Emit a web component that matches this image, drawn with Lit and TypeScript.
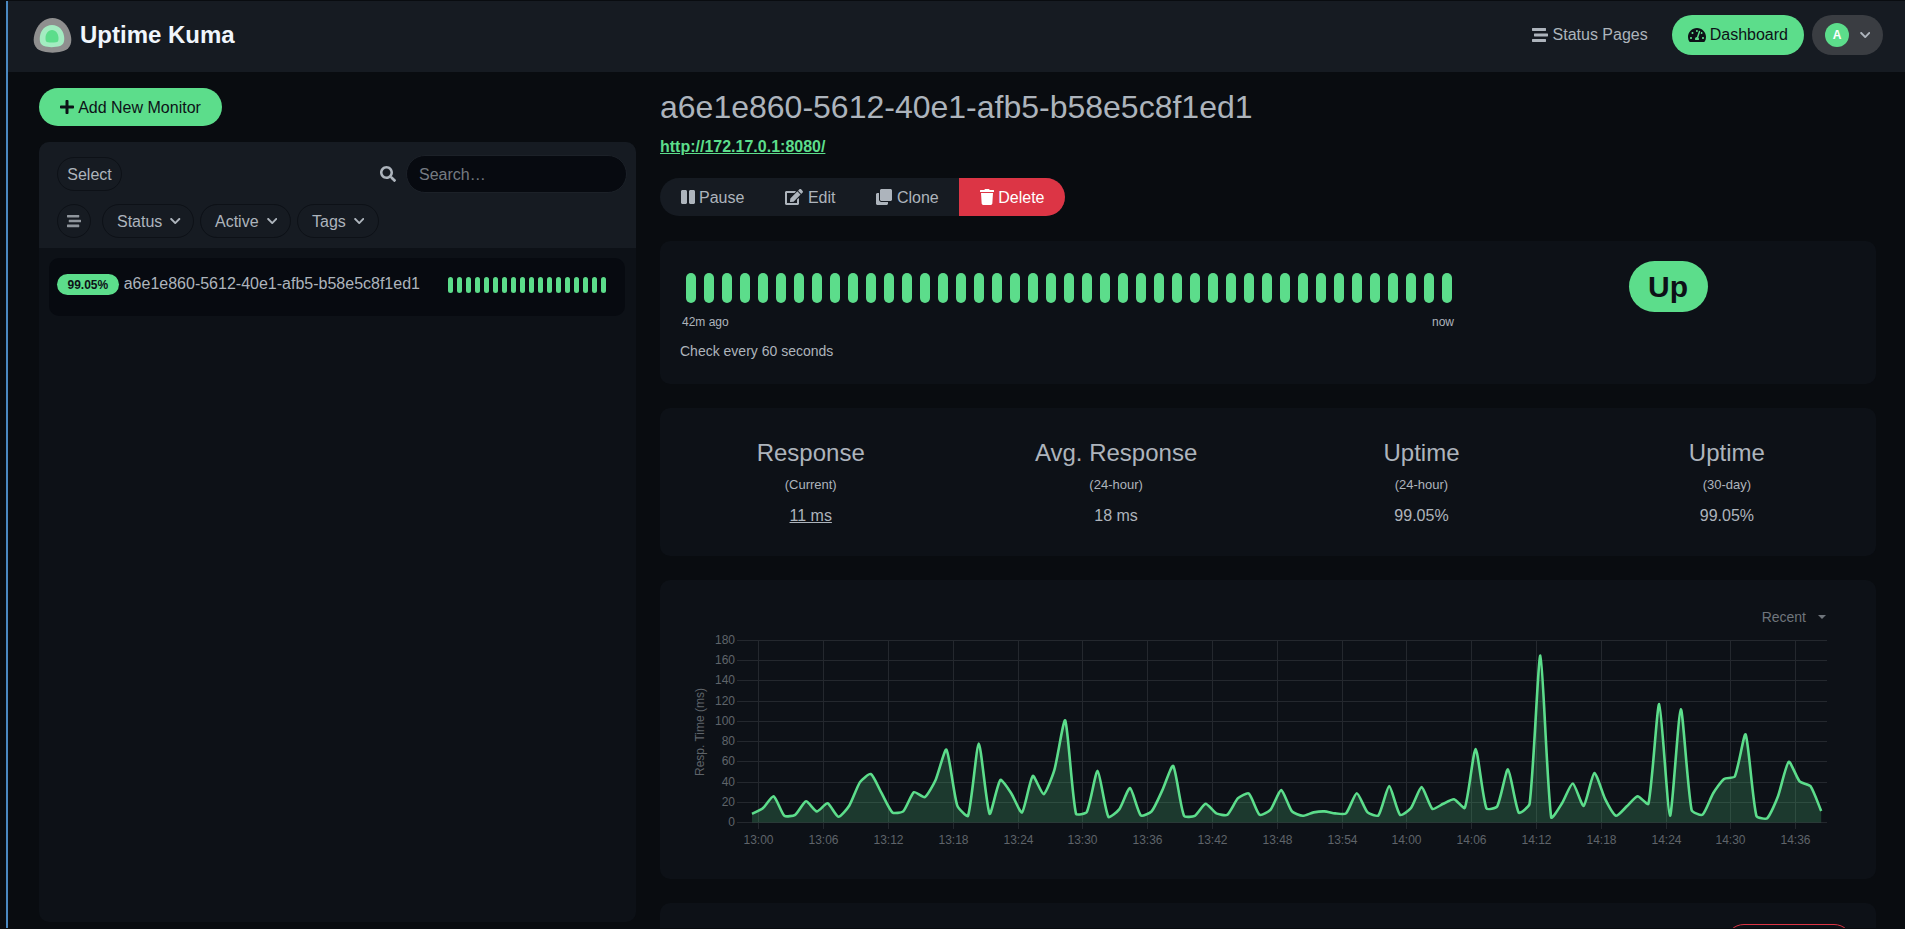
import { LitElement, html, css, svg } from "lit";
import { customElement } from "lit/decorators.js";

const ICONS: Record<string, [number, string]> = {
  plus: [448, "M416 208H272V64c0-17.67-14.33-32-32-32h-32c-17.67 0-32 14.33-32 32v144H32c-17.67 0-32 14.33-32 32v32c0 17.67 14.33 32 32 32h144v144c0 17.67 14.33 32 32 32h32c17.67 0 32-14.33 32-32V304h144c17.67 0 32-14.33 32-32v-32c0-17.67-14.33-32-32-32z"],
  search: [512, "M505 442.7L405.3 343c-4.5-4.5-10.6-7-17-7H372c27.6-35.3 44-79.7 44-128C416 93.1 322.9 0 208 0S0 93.1 0 208s93.1 208 208 208c48.3 0 92.7-16.4 128-44v16.3c0 6.4 2.5 12.5 7 17l99.7 99.7c9.4 9.4 24.6 9.4 33.9 0l28.3-28.3c9.4-9.4 9.4-24.6.1-34zM208 336c-70.7 0-128-57.2-128-128 0-70.7 57.2-128 128-128 70.7 0 128 57.2 128 128 0 70.7-57.2 128-128 128z"],
  chevron: [448, "M207.029 381.476L12.686 187.132c-9.373-9.373-9.373-24.569 0-33.941l22.667-22.667c9.357-9.357 24.522-9.375 33.901-.04L224 284.505l154.745-154.021c9.379-9.335 24.544-9.317 33.901.04l22.667 22.667c9.373 9.373 9.373 24.569 0 33.941L240.971 381.476c-9.373 9.372-24.569 9.372-33.942 0z"],
  stream: [512, "M16 128h416c8.84 0 16-7.16 16-16V48c0-8.84-7.16-16-16-16H16C7.16 32 0 39.16 0 48v64c0 8.84 7.16 16 16 16zm480 80H80c-8.84 0-16 7.16-16 16v64c0 8.84 7.16 16 16 16h416c8.84 0 16-7.16 16-16v-64c0-8.84-7.16-16-16-16zm-64 176H16c-8.84 0-16 7.16-16 16v64c0 8.84 7.16 16 16 16h416c8.84 0 16-7.16 16-16v-64c0-8.84-7.16-16-16-16z"],
  gauge: [576, "M288 32C128.94 32 0 160.94 0 320c0 52.8 14.25 102.26 39.06 144.8 5.61 9.62 16.3 15.2 27.44 15.2h443c11.14 0 21.83-5.58 27.44-15.2C561.75 422.26 576 372.8 576 320c0-159.06-128.94-288-288-288zm0 64c14.71 0 26.58 10.13 30.32 23.65-1.11 2.26-2.64 4.23-3.45 6.67l-9.22 27.67c-5.13 3.49-10.97 6.01-17.64 6.01-17.67 0-32-14.33-32-32S270.33 96 288 96zM96 384c-17.67 0-32-14.33-32-32s14.33-32 32-32 32 14.33 32 32-14.33 32-32 32zm48-160c-17.67 0-32-14.33-32-32s14.33-32 32-32 32 14.33 32 32-14.33 32-32 32zm246.77-72.41l-61.33 184C343.13 347.33 352 364.54 352 384c0 11.72-3.38 22.55-8.88 32H232.88c-5.5-9.45-8.88-20.28-8.88-32 0-33.94 26.5-61.43 59.9-63.59l61.34-184.01c4.17-12.56 17.73-19.45 30.36-15.17 12.57 4.19 19.35 17.79 15.17 30.36zm14.66 57.2l15.52-46.55c3.47-1.29 7.13-2.23 11.05-2.23 17.67 0 32 14.33 32 32s-14.33 32-32 32c-11.38-.01-20.89-6.28-26.57-15.22zM480 384c-17.67 0-32-14.33-32-32s14.33-32 32-32 32 14.33 32 32-14.33 32-32 32z"],
  pause: [448, "M144 479H48c-26.5 0-48-21.5-48-48V79c0-26.5 21.5-48 48-48h96c26.5 0 48 21.5 48 48v352c0 26.5-21.5 48-48 48zm304-48V79c0-26.5-21.5-48-48-48h-96c-26.5 0-48 21.5-48 48v352c0 26.5 21.5 48 48 48h96c26.5 0 48-21.5 48-48z"],
  edit: [576, "M402.6 83.2l90.2 90.2c3.8 3.8 3.8 10 0 13.8L274.4 405.6l-92.8 10.3c-12.4 1.4-22.9-9.1-21.5-21.5l10.3-92.8L388.8 83.2c3.8-3.8 10-3.8 13.8 0zm162-22.9l-48.8-48.8c-15.2-15.2-39.9-15.2-55.2 0l-35.4 35.4c-3.8 3.8-3.8 10 0 13.8l90.2 90.2c3.8 3.8 10 3.8 13.8 0l35.4-35.4c15.2-15.3 15.2-40 0-55.2zM384 346.2V448H64V128h229.8c3.2 0 6.2-1.3 8.5-3.5l40-40c7.6-7.6 2.2-20.5-8.5-20.5H48C21.5 64 0 85.5 0 112v352c0 26.5 21.5 48 48 48h352c26.5 0 48-21.5 48-48V306.2c0-10.7-12.9-16-20.5-8.5l-40 40c-2.2 2.3-3.5 5.3-3.5 8.5z"],
  clone: [512, "M464 0c26.51 0 48 21.49 48 48v288c0 26.51-21.49 48-48 48H176c-26.51 0-48-21.49-48-48V48c0-26.51 21.49-48 48-48h288M176 416c-44.112 0-80-35.888-80-80V128H48c-26.51 0-48 21.49-48 48v288c0 26.51 21.49 48 48 48h288c26.51 0 48-21.49 48-48v-48H176z"],
  trash: [448, "M432 32H312l-9.4-18.7A24 24 0 0 0 281.1 0H166.8a23.72 23.72 0 0 0-21.4 13.3L136 32H16A16 16 0 0 0 0 48v32a16 16 0 0 0 16 16h416a16 16 0 0 0 16-16V48a16 16 0 0 0-16-16zM53.2 467a48 48 0 0 0 47.9 45h245.8a48 48 0 0 0 47.9-45L416 128H32z"],
};

function icon(name: string, size = 16) {
  const [w, d] = ICONS[name];
  return html`<svg class="ico" width=${(size * w) / 512} height=${size} viewBox="0 0 ${w} 512" fill="currentColor"><path d=${d}></path></svg>`;
}

// response times, one sample per minute
const PINGS = [
  8.6, 14, 26, 6.6, 7.6, 21, 11, 19, 5.6, 16.5, 40, 48, 29, 10, 11, 30, 25, 42, 72, 17,
  6.6, 78, 8.6, 42, 29, 10, 46, 28, 52, 101, 8.6, 10.5, 51, 5.6, 13, 34, 7, 11, 32, 56,
  6.6, 6.6, 18.5, 9, 7.6, 24, 28.7, 7.6, 12.5, 32, 11, 6.6, 10, 11, 9, 9, 29, 10, 7, 36,
  7.6, 14, 35, 13.5, 18.5, 23, 14.5, 72.6, 14, 16, 52.5, 9.6, 18.5, 165, 5, 19, 38.6, 16.5, 49, 23,
  6.6, 16, 26, 18.5, 117, 6.6, 112, 12.5, 7.6, 29, 43, 45.5, 87, 6.6, 4.3, 26, 60, 40.6, 36, 11.5,
];

const TIME_LABELS = ["13:00", "13:06", "13:12", "13:18", "13:24", "13:30", "13:36", "13:42", "13:48", "13:54", "14:00", "14:06", "14:12", "14:18", "14:24", "14:30", "14:36"];

const X0 = 752;
const STEP = 10.8;
const Y0 = 822.5;
const PX_PER_MS = 182 / 180;
const TENSION = 0.2;

// bezier spline through the samples, chart.js style
function linePath(): string {
  const pts = PINGS.map((v, i) => [X0 + i * STEP, Y0 - v * PX_PER_MS]);
  const n = pts.length;
  const before: number[][] = [];
  const after: number[][] = [];
  for (let i = 0; i < n; i++) {
    const prev = pts[Math.max(i - 1, 0)];
    const cur = pts[i];
    const next = pts[Math.min(i + 1, n - 1)];
    const d01 = Math.hypot(cur[0] - prev[0], cur[1] - prev[1]);
    const d12 = Math.hypot(next[0] - cur[0], next[1] - cur[1]);
    const s = d01 + d12;
    const fa = (TENSION * d01) / s;
    const fb = (TENSION * d12) / s;
    before.push([cur[0] - fa * (next[0] - prev[0]), cur[1] - fa * (next[1] - prev[1])]);
    after.push([cur[0] + fb * (next[0] - prev[0]), cur[1] + fb * (next[1] - prev[1])]);
  }
  let d = `M${pts[0][0]} ${pts[0][1].toFixed(1)}`;
  for (let i = 0; i < n - 1; i++) {
    d += `C${after[i][0].toFixed(1)} ${after[i][1].toFixed(1)} ${before[i + 1][0].toFixed(1)} ${before[i + 1][1].toFixed(1)} ${pts[i + 1][0].toFixed(1)} ${pts[i + 1][1].toFixed(1)}`;
  }
  return d;
}

@customElement("ping-chart")
class PingChart extends LitElement {
  static styles = css`
    :host { display: block; }
    svg { display: block; }
    text { font-family: "Liberation Sans", Arial, sans-serif; font-size: 12px; fill: #5f646a; }
  `;

  render() {
    const d = linePath();
    const last = X0 + (PINGS.length - 1) * STEP;
    const ticks = [0, 20, 40, 60, 80, 100, 120, 140, 160, 180];
    return html`<svg width="1216" height="253" viewBox="660 626 1216 253">
      ${ticks.map((v) => {
        const y = Math.floor(Y0 - v * PX_PER_MS) + 0.5;
        return svg`<line x1="737" x2="1827" y1=${y} y2=${y} stroke="#24282e"></line>
          <text x="735" y=${y + 3.5} text-anchor="end">${v}</text>`;
      })}
      ${TIME_LABELS.map((t, i) => {
        const x = Math.floor(758.8 + i * 64.8) + 0.5;
        return svg`<line x1=${x} x2=${x} y1="640" y2="829" stroke="#24282e"></line>
          <text x=${x} y="844" text-anchor="middle">${t}</text>`;
      })}
      <text transform="translate(704 732) rotate(-90)" text-anchor="middle">Resp. Time (ms)</text>
      <path d="${d}L${last} ${Y0}L${X0} ${Y0}Z" fill="rgba(92,221,139,.2)"></path>
      <path d=${d} fill="none" stroke="#5cdd8b" stroke-width="2.6"></path>
    </svg>`;
  }
}

@customElement("app-root")
class AppRoot extends LitElement {
  static styles = css`
    :host {
      display: block;
      height: 100vh;
      box-sizing: border-box;
      padding: 1px 0 1px 6px;
      background: #090c10;
      color: #adb4bc;
      font-family: "Liberation Sans", Arial, sans-serif;
      font-size: 16px;
    }
    * { box-sizing: border-box; }
    .ico { display: block; flex: none; }
    .frame {
      height: 100%;
      overflow: hidden;
      border-left: 2px solid #4a88c0;
    }
    .nav {
      height: 71px;
      background: #161b22;
      display: flex;
      align-items: center;
      padding: 0 22px 3px 25px;
    }
    .logo { display: block; margin-right: 8px; }
    .brand { font-size: 24px; font-weight: 700; color: #f0f6fc; }
    .nav-links { margin-left: auto; display: flex; align-items: center; }
    .status-link { display: flex; align-items: center; gap: 5px; margin-right: 24px; }
    .dash {
      height: 40px;
      display: flex;
      align-items: center;
      gap: 4px;
      padding: 0 16px;
      border-radius: 20px;
      background: #5cdd8b;
      color: #0d1117;
    }
    .user {
      margin-left: 8px;
      width: 71px;
      height: 40px;
      border-radius: 20px;
      background: #3a3d42;
      display: flex;
      align-items: center;
      padding: 0 13px;
      justify-content: space-between;
    }
    .avatar {
      width: 24px;
      height: 24px;
      border-radius: 50%;
      background: #5cdd8b;
      color: #fff;
      font-size: 12px;
      font-weight: 700;
      display: flex;
      align-items: center;
      justify-content: center;
    }
    .main { display: flex; gap: 24px; padding: 16px 29px 0 31px; }
    .left { width: 597px; flex: none; }
    .right { flex: 1; min-width: 0; }
    .add {
      width: 183px;
      height: 38px;
      border-radius: 19px;
      background: #5cdd8b;
      color: #0d1117;
      display: flex;
      align-items: center;
      justify-content: center;
      gap: 4px;
      padding-top: 2px;
    }
    .add .ico, .pill .ico, .actions .ico { margin-top: -2px; }
    .list {
      margin-top: 16px;
      height: 780px;
      background: #0d1117;
      border-radius: 10px;
      overflow: hidden;
    }
    .list-head { height: 106px; background: #161b22; padding: 13px 9px 0 18px; }
    .head-row { display: flex; align-items: center; height: 38px; }
    .pill {
      height: 34px;
      border: 1px solid #0d1117;
      border-radius: 17px;
      display: flex;
      align-items: center;
      background: #161b22;
      padding-top: 2px;
    }
    .select { width: 65px; justify-content: center; }
    .search-ico { margin-left: auto; margin-right: 10px; }
    .search {
      width: 221px;
      height: 38px;
      border: 1px solid #1c2128;
      border-radius: 19px;
      background: #070a10;
      color: #adb4bc;
      font: inherit;
      padding: 1px 12px 0;
      outline: none;
    }
    .search::placeholder { color: #757b81; opacity: 1; }
    .filters { display: flex; margin-top: 11px; gap: 6px; }
    .burger { width: 34px; justify-content: center; margin-right: 5px; color: #8f959c; }
    .filter { padding: 2px 14px 0; gap: 8px; }
    .row {
      margin: 10px 11px 0 10px;
      height: 58px;
      border-radius: 10px;
      background: #070a10;
      display: flex;
      align-items: center;
      padding: 0 19px 5px 8px;
    }
    .badge {
      height: 21px;
      padding: 0 10.5px;
      border-radius: 11px;
      background: #5cdd8b;
      color: #0d1117;
      font-size: 12px;
      font-weight: 700;
      display: flex;
      align-items: center;
    }
    .name { margin-left: 5px; margin-top: -2px; }
    .mini { margin-left: auto; display: flex; gap: 4px; }
    .mini i { width: 5px; height: 16px; border-radius: 3px; background: #5cdd8b; }
    h1 { margin: 0; font-size: 32px; font-weight: 400; line-height: 38px; }
    .url {
      display: block;
      margin-top: 9px;
      line-height: 24px;
      font-weight: 700;
      color: #5cdd8b;
      text-decoration: underline;
    }
    .actions {
      margin-top: 19px;
      display: inline-flex;
      height: 38px;
      border-radius: 19px;
      overflow: hidden;
      background: #161b22;
      vertical-align: top;
    }
    .actions span {
      display: flex;
      align-items: center;
      gap: 4.5px;
      padding: 2px 20.5px 0;
    }
    .actions .del { background: #dc3545; color: #fff; }
    .card { background: #0d1117; border-radius: 10px; }
    .beats {
      margin-top: 25px;
      height: 143px;
      display: flex;
    }
    .beat-left { width: 800px; padding: 32px 0 0 20px; }
    .bars { display: flex; gap: 8px; padding-left: 6px; }
    .bars i { width: 10px; height: 30px; border-radius: 5px; background: #5cdd8b; }
    .ago {
      display: flex;
      justify-content: space-between;
      margin-top: 12px;
      padding: 0 6px 0 2px;
      font-size: 12px;
      line-height: 14px;
    }
    .every { margin-top: 12px; font-size: 14px; line-height: 21px; }
    .beat-right { flex: 1; display: flex; justify-content: center; padding-top: 20px; }
    .up {
      width: 79px;
      height: 51px;
      border-radius: 26px;
      background: #5cdd8b;
      color: #0d1117;
      font-size: 30px;
      font-weight: 700;
      display: flex;
      align-items: center;
      justify-content: center;
    }
    .stats {
      margin-top: 24px;
      height: 148px;
      padding: 30px 0 0;
    }
    .stat-grid {
      display: grid;
      grid-template-columns: repeat(4, 305.4px);
      margin-left: -2px;
      text-align: center;
    }
    .stat-title { font-size: 24px; line-height: 29px; }
    .stat-sub { font-size: 13px; line-height: 16px; margin-top: 10px; }
    .stat-val { line-height: 24px; margin-top: 11px; }
    .stat-val.link { text-decoration: underline; }
    .chart { margin-top: 24px; height: 299px; padding-top: 27px; }
    .recent {
      display: flex;
      align-items: center;
      justify-content: flex-end;
      height: 19px;
      padding-right: 50px;
      font-size: 14px;
      color: #6f757c;
    }
    .caret {
      margin-left: 12px;
      border: 4px solid transparent;
      border-top-color: #6f757c;
      border-bottom: 0;
    }
    .bottom { margin-top: 24px; height: 120px; padding: 21px 23px 0 0; display: flex; justify-content: flex-end; }
    .clear {
      width: 128px;
      height: 38px;
      border: 1px solid #dc3545;
      border-radius: 19px;
    }
  `;

  private filter(label: string, w: number) {
    return html`<div class="pill filter" style="width:${w}px">${label}${icon("chevron", 12)}</div>`;
  }

  render() {
    return html`<div class="frame">
      <div class="nav">
        <svg class="logo" width="39" height="35" viewBox="0 0 39 35">
          <path d="M19.5 0C27 0 33 5 36 12C39 19 39.500 26 35 30.500C29 36 10 36 4 30.500C-.5 26 0 19 3 12C6 5 12 0 19.5 0Z" fill="#8f8f8f"></path>
          <path d="M19 7C26 7 30 12 31 18C32 24 30 27 27 28C22 29.500 15 29.500 11 28C8 27 6 24 7 18C8 12 12 7 19 7Z" fill="#a3ecc1"></path>
          <path d="M19 12C23 12 25.500 16 25.500 20C25.500 23 25 24 23 24.200C20 24.600 17 24.600 15 24.200C13 24 12.500 23 12.500 20C12.500 16 15 12 19 12Z" fill="#5cdd8b"></path>
        </svg>
        <span class="brand">Uptime Kuma</span>
        <div class="nav-links">
          <div class="status-link">${icon("stream", 16)}Status Pages</div>
          <div class="dash">${icon("gauge", 16)}Dashboard</div>
          <div class="user"><span class="avatar">A</span>${icon("chevron", 12)}</div>
        </div>
      </div>
      <div class="main">
        <div class="left">
          <div class="add">${icon("plus", 16)}Add New Monitor</div>
          <div class="list">
            <div class="list-head">
              <div class="head-row">
                <div class="pill select">Select</div>
                <span class="search-ico">${icon("search", 16)}</span>
                <input class="search" placeholder="Search…" />
              </div>
              <div class="filters">
                <div class="pill burger">${icon("stream", 14)}</div>
                ${this.filter("Status", 92)}${this.filter("Active", 91)}${this.filter("Tags", 82)}
              </div>
            </div>
            <div class="row">
              <span class="badge">99.05%</span>
              <span class="name">a6e1e860-5612-40e1-afb5-b58e5c8f1ed1</span>
              <div class="mini">${Array.from({ length: 18 }, () => html`<i></i>`)}</div>
            </div>
          </div>
        </div>
        <div class="right">
          <h1>a6e1e860-5612-40e1-afb5-b58e5c8f1ed1</h1>
          <span class="url">http://172.17.0.1:8080/</span>
          <div class="actions">
            <span>${icon("pause", 16)}Pause</span>
            <span>${icon("edit", 16)}Edit</span>
            <span>${icon("clone", 16)}Clone</span>
            <span class="del">${icon("trash", 16)}Delete</span>
          </div>
          <div class="card beats">
            <div class="beat-left">
              <div class="bars">${Array.from({ length: 43 }, () => html`<i></i>`)}</div>
              <div class="ago"><span>42m ago</span><span>now</span></div>
              <div class="every">Check every 60 seconds</div>
            </div>
            <div class="beat-right"><div class="up">Up</div></div>
          </div>
          <div class="card stats">
            <div class="stat-grid">
              <div><div class="stat-title">Response</div><div class="stat-sub">(Current)</div><div class="stat-val link">11 ms</div></div>
              <div><div class="stat-title">Avg. Response</div><div class="stat-sub">(24-hour)</div><div class="stat-val">18 ms</div></div>
              <div><div class="stat-title">Uptime</div><div class="stat-sub">(24-hour)</div><div class="stat-val">99.05%</div></div>
              <div><div class="stat-title">Uptime</div><div class="stat-sub">(30-day)</div><div class="stat-val">99.05%</div></div>
            </div>
          </div>
          <div class="card chart">
            <div class="recent">Recent<span class="caret"></span></div>
            <ping-chart></ping-chart>
          </div>
          <div class="card bottom"><div class="clear"></div></div>
        </div>
      </div>
    </div>`;
  }
}
